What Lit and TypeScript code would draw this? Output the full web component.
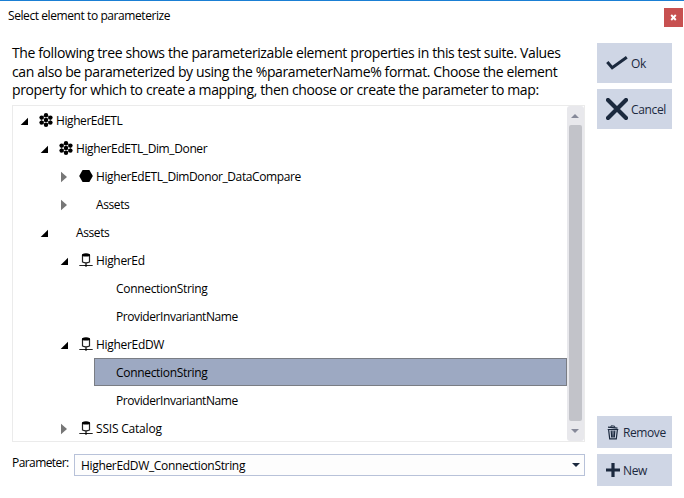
import { LitElement, html, svg, css, nothing } from "lit";

type IconName = "suite" | "test" | "connection" | "check" | "cross" | "trash" | "plus";

interface TreeRow {
  label: string;
  level: number;
  spacing: number;
  state?: "open" | "closed";
  icon?: IconName;
  selected?: boolean;
}

const ROWS: TreeRow[] = [
  { label: "HigherEdETL", level: 0, spacing: -0.42, state: "open", icon: "suite" },
  { label: "HigherEdETL_Dim_Doner", level: 1, spacing: -0.38, state: "open", icon: "suite" },
  { label: "HigherEdETL_DimDonor_DataCompare", level: 2, spacing: -0.4, state: "closed", icon: "test" },
  { label: "Assets", level: 2, spacing: -0.4, state: "closed" },
  { label: "Assets", level: 1, spacing: -0.4, state: "open" },
  { label: "HigherEd", level: 2, spacing: -0.34, state: "open", icon: "connection" },
  { label: "ConnectionString", level: 3, spacing: -0.32 },
  { label: "ProviderInvariantName", level: 3, spacing: -0.41 },
  { label: "HigherEdDW", level: 2, spacing: -0.31, state: "open", icon: "connection" },
  { label: "ConnectionString", level: 3, spacing: -0.32, selected: true },
  { label: "ProviderInvariantName", level: 3, spacing: -0.41 },
  { label: "SSIS Catalog", level: 2, spacing: -0.2, state: "closed", icon: "connection" },
];

const dots = [[7, 2.3], [2.6, 4.6], [11.4, 4.6], [7, 7], [2.6, 9.6], [11.4, 9.6], [7, 11.7]];

const ICONS: Record<IconName, [number, number, unknown]> = {
  suite: [14, 14, svg`<g fill="#000">${dots.map(([x, y]) => svg`<circle cx=${x} cy=${y} r="2.2"/>`)}</g>
    <path d="M7 2.3 2.6 4.6v5L7 11.7l4.4-2.1v-5ZM2.6 4.6l8.8 5M11.4 4.6l-8.8 5" fill="none" stroke="#000" stroke-width=".6"/>`],
  test: [14, 14, svg`<path d="M3.6 1h6.8L13.8 7l-3.4 6H3.6L.2 7Z" fill="#000"/>`],
  connection: [14, 14, svg`<path d="M3.5 2v7q3.5 1.6 7 0V2" fill="#fff" stroke="#222" stroke-width="1.2"/>
    <path d="M3 1.2Q7-.6 11 1.2V3Q7 4.2 3 3Z" fill="#000"/>
    <path d="M7 10v2" stroke="#222" stroke-width="1.4"/><path d="M.3 12.5h13.4" stroke="#222"/><path d="M5.2 12.3h3.6L7 14Z" fill="#000"/>`],
  check: [22, 16, svg`<path d="M1.3 7 6.2 12.8 20.8 2.3" fill="none" stroke="#1b293e" stroke-width="3"/>`],
  cross: [22, 22, svg`<path d="M2 2 20 20M20 2 2 20" fill="none" stroke="#1b293e" stroke-width="4.2" stroke-linecap="round"/>`],
  trash: [12, 15, svg`<path d="M.7 4.5h10.6M1 2.2l9.5.9" stroke="#1b293e" stroke-width="1.2" fill="none"/>
    <path d="M3.8 2.2 4.2.8l3.4.4.2 1.5" stroke="#1b293e" fill="none"/>
    <path d="M1.6 4.6 2.7 13.8h6.6l1.1-9.2M4.2 5.5l.5 7M6 5.5v7M7.8 5.5l-.5 7" stroke="#1b293e" stroke-width="1.2" fill="none"/>`],
  plus: [14, 14, svg`<path d="M7 0v14M0 7h14" stroke="#1b293e" stroke-width="3.2"/>`],
};

const icon = (name: IconName) => {
  const [w, h, body] = ICONS[name];
  return html`<svg class="icon" width=${w} height=${h} viewBox="0 0 ${w} ${h}">${body}</svg>`;
};

class AppRoot extends LitElement {
  static styles = css`
    :host {
      display: block;
      box-sizing: border-box;
      width: 684px;
      height: 498px;
      overflow: hidden;
      border-top: 1px solid #1a7fd4;
      background: #fff;
      color: #000;
      font: 12px/16px "Open Sans", "Noto Sans", sans-serif;
      white-space: nowrap;
    }
    .titlebar { display: flex; justify-content: space-between; height: 42px; padding: 7px 1px 0 8px; box-sizing: border-box; }
    .title { letter-spacing: -0.42px; }
    .close { display: flex; align-items: center; justify-content: center; width: 19px; height: 19px; background: #c75050; }
    .icon { display: block; flex: none; }
    .body { display: flex; gap: 12px; padding-left: 12px; height: 443px; }
    .main { width: 573px; display: flex; flex-direction: column; }
    .intro { height: 62px; padding-top: 1px; box-sizing: border-box; font-size: 14px; line-height: 18.7px; }
    .l1 { letter-spacing: -0.385px; }
    .l2 { letter-spacing: -0.395px; }
    .l3 { letter-spacing: -0.365px; }
    .tree { display: flex; flex: none; height: 337px; box-sizing: border-box; border: 1px solid #ebebeb; overflow: hidden; }
    .rows { flex: 1; }
    .row { display: flex; align-items: center; height: 28px; }
    .indent { flex: none; }
    .expander { margin: 1px 8px 0 0; flex: none; }
    .slot { width: 14px; margin-right: 3px; flex: none; }
    .content { display: flex; align-items: center; height: 28px; flex: 1; box-sizing: border-box; padding-top: 1px; }
    .leaf .content { margin-left: 81px; padding-left: 22px; }
    .selected .content { padding: 1px 0 0 21px; background: #9da9c2; border: 1px solid #7a7d84; }
    .scroll { display: flex; flex-direction: column; align-items: center; width: 17px; border-radius: 3px; background: #e8e8ec; }
    .arrow { display: flex; align-items: center; justify-content: center; height: 19px; }
    .arrow svg { margin-right: 1px; }
    .thumb { width: 13px; height: 296px; border-radius: 2px; background: #c2c3c9; }
    .parameter { display: flex; margin-top: 12px; height: 22px; }
    .plabel { width: 62px; padding-top: 1px; letter-spacing: -0.58px; }
    .combo { display: flex; align-items: center; justify-content: space-between; flex: 1; box-sizing: border-box; border: 1px solid #b8c2d9; background: #fdfdfd; padding: 2px 4px 0 6px; letter-spacing: -0.33px; }
    .combo svg { margin-top: -2px; }
    .side { display: flex; flex-direction: column; width: 75px; gap: 6px; }
    .button { display: flex; align-items: center; gap: 3px; height: 40px; padding-left: 9px; box-sizing: border-box; background: #cfd6e5; color: #1b293e; letter-spacing: -0.35px; }
    .button span { padding-top: 2px; }
    .small { height: 32px; letter-spacing: -0.4px; }
    .trash { padding-left: 10px; gap: 4px; }
    .spacer { flex: 1; }
  `;

  private row(r: TreeRow) {
    const leaf = r.level === 3;
    const triangle = r.state === "open"
      ? svg`<path d="M7.7 11h7.3V3.7Z" fill="#000"/>`
      : svg`<path d="M8 1.8v10.4l6-5.2Z" fill="#777"/>`;
    return html`<div class="row ${leaf ? "leaf" : ""} ${r.selected ? "selected" : ""}">
      ${leaf ? nothing : html`
        <div class="indent" style="width:${r.level * 20}px"></div>
        <svg class="expander" width="18" height="14" viewBox="0 0 18 14">${triangle}</svg>
        <div class="slot">${r.icon ? icon(r.icon) : nothing}</div>`}
      <div class="content"><span style="letter-spacing:${r.spacing}px">${r.label}</span></div>
    </div>`;
  }

  render() {
    return html`
      <div class="titlebar">
        <span class="title">Select element to parameterize</span>
        <div class="close"><svg width="7" height="7" viewBox="0 0 7 7"><path d="M1.2 1 5.8 6M5.8 1 1.2 6" stroke="#fff" stroke-width="1.9"/></svg></div>
      </div>
      <div class="body">
        <div class="main">
          <div class="intro">
            <div class="l1">The following tree shows the parameterizable element properties in this test suite. Values</div>
            <div class="l2">can also be parameterized by using the %parameterName% format. Choose the element</div>
            <div class="l3">property for which to create a mapping, then choose or create the parameter to map:</div>
          </div>
          <div class="tree">
            <div class="rows">${ROWS.map((r) => this.row(r))}</div>
            <div class="scroll">
              <div class="arrow"><svg width="8" height="4" viewBox="0 0 8 4"><path d="M0 4 4 0l4 4Z" fill="#868999"/></svg></div>
              <div class="thumb"></div>
              <div class="arrow"><svg width="8" height="4" viewBox="0 0 8 4"><path d="M0 0 4 4l4-4Z" fill="#868999"/></svg></div>
            </div>
          </div>
          <div class="parameter">
            <span class="plabel">Parameter:</span>
            <div class="combo"><span>HigherEdDW_ConnectionString</span><svg width="8" height="4" viewBox="0 0 8 4"><path d="M0 0 4 4l4-4Z" fill="#1b293e"/></svg></div>
          </div>
        </div>
        <div class="side">
          <div class="button">${icon("check")}<span>Ok</span></div>
          <div class="button">${icon("cross")}<span>Cancel</span></div>
          <div class="spacer"></div>
          <div class="button small trash">${icon("trash")}<span>Remove</span></div>
          <div class="button small">${icon("plus")}<span>New</span></div>
        </div>
      </div>`;
  }
}
customElements.define("app-root", AppRoot);
